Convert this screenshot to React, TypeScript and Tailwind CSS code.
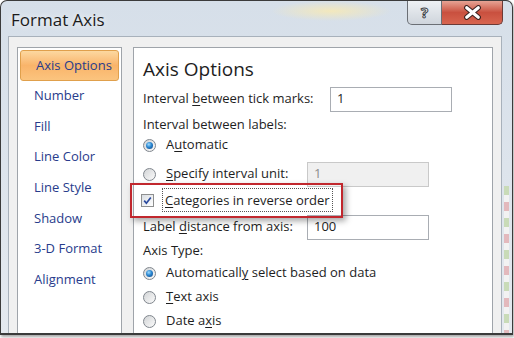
import React from 'react';

const navItems = ['Axis Options', 'Number', 'Fill', 'Line Color', 'Line Style', 'Shadow', '3-D Format', 'Alignment'];

const Radio = ({ checked }: { checked?: boolean }) => (
  <span className="w-[13px] h-[13px] rounded-full border border-[#80868d] bg-linear-to-br from-[#d2d4d6] to-[#fbfbfb] flex items-center justify-center shrink-0">
    {checked && (
      <span className="w-[7px] h-[7px] rounded-full bg-[radial-gradient(circle_at_40%_35%,#9fdcff_0%,#2a86d0_45%,#0f3f7c_100%)]" />
    )}
  </span>
);

const Check = () => (
  <span className="w-[13px] h-[13px] border border-[#8e8f8f] bg-linear-to-br from-[#d9dde2] to-white flex items-center justify-center shrink-0">
    <svg viewBox="0 0 11 11" className="w-[11px] h-[11px]">
      <path d="M2.2 5.6 L4.4 8.2 L8.8 2.4" stroke="#2b4a9e" strokeWidth="1.7" fill="none" />
    </svg>
  </span>
);

const U = ({ children }: { children: React.ReactNode }) => (
  <span className="underline decoration-1 underline-offset-2">{children}</span>
);

const Field = ({ value, disabled }: { value: string; disabled?: boolean }) => (
  <div
    className={
      disabled
        ? 'w-[122px] h-[25px] border border-[#c9c9c9] bg-[#f0f0f0] text-[#8d8d8d] flex items-center pl-[6px]'
        : 'w-[122px] h-[25px] border border-[#a9adb3] bg-white text-[#1e1e1e] flex items-center pl-[6px]'
    }
  >
    {value}
  </div>
);

export default function App() {
  return (
    <div className="w-[514px] h-[338px] bg-white overflow-hidden font-['Open_Sans','Noto_Sans',sans-serif]">
      <div className="w-[513px] h-[335px] rounded-t-[7px] border border-b-2 border-[#3b3b3b] bg-linear-to-b from-[#d6dfe9] to-[#e4e9ef] flex flex-col overflow-hidden shadow-[1px_2px_3px_rgba(0,0,0,0.35)]">
        {/* title bar */}
        <div className="h-[35px] flex items-start shrink-0 bg-[radial-gradient(ellipse_60px_10px_at_330px_10px,rgba(255,236,170,0.7),transparent)]">
          <span className="pl-[10px] pt-[7px] text-[17px] leading-[23px] text-[#1b1b1b] [text-shadow:0_0_6px_#fff]">Format Axis</span>
          <div className="ml-auto mr-[9px] flex">
            <div className="w-[35px] h-[24px] border border-t-0 border-[#6b6f75] rounded-bl-[5px] bg-linear-to-b from-[#eef1f4] to-[#cfd5dc] flex items-center justify-center">
              <span className="text-white font-bold text-[15px] leading-none [-webkit-text-stroke:1px_#3f4348]">?</span>
            </div>
            <div className="w-[61px] h-[24px] border border-t-0 border-l-0 border-[#6b3a36] rounded-br-[5px] bg-linear-to-b from-[#e6a394] via-[#c9503f] to-[#d8654f] flex items-center justify-center">
              <svg viewBox="0 0 18 14" className="w-[19px] h-[15px]">
                <path d="M3.5 2.5 L14.5 11.5 M14.5 2.5 L3.5 11.5" stroke="#3b2220" strokeWidth="5" strokeLinecap="round" />
                <path d="M3.5 2.5 L14.5 11.5 M14.5 2.5 L3.5 11.5" stroke="#ffffff" strokeWidth="3" strokeLinecap="round" />
              </svg>
            </div>
          </div>
        </div>

        {/* frame + client */}
        <div className="flex flex-1 min-h-0">
          <div className="w-[7px] shrink-0" />
          <div className="flex-1 border-t border-l border-r border-[#a8b1bb] bg-[#f0f0f0] pt-[10px] pl-[8px] pr-[8px] flex gap-[11px] min-h-0">
            {/* nav list */}
            <div className="w-[105px] shrink-0 border border-b-0 border-[#9fa4aa] bg-white pt-[2px] px-[2px]">
              {navItems.map((item, i) => (
                <div
                  key={item}
                  className={
                    i === 0
                      ? 'h-[30.6px] flex items-center pl-[15px] rounded-[3px] border border-[#e0a04c] bg-linear-to-b from-[#fcd8a0] via-[#f9b46a] to-[#fbc47e] text-[13px] text-[#283c8c]'
                      : 'h-[30.6px] flex items-center pl-[14px] text-[13px] text-[#283c8c]'
                  }
                >
                  {item}
                </div>
              ))}
            </div>

            {/* options panel */}
            <div className="flex-1 border border-b-0 border-[#9fa4aa] bg-white pl-[9px] text-[13px] text-[#1e1e1e]">
              <div className="pt-[8px] h-[36px] text-[19px] leading-[27px] text-[#1e1e1e]">Axis Options</div>
              <div className="mt-[2px] h-[26px] flex items-center">
                <span className="w-[187px]">
                  Interval <U>b</U>etween tick marks:
                </span>
                <Field value="1" />
              </div>
              <div className="mt-[3px] h-[20px] flex items-center">Interval between labels:</div>
              <div className="h-[20px] flex items-center gap-[10px]">
                <Radio checked />
                <span>
                  A<U>u</U>tomatic
                </span>
              </div>
              <div className="mt-[6px] h-[26px] flex items-center">
                <div className="w-[164px] flex items-center gap-[10px]">
                  <Radio />
                  <span>
                    <U>S</U>pecify interval unit:
                  </span>
                </div>
                <Field value="1" disabled />
              </div>
              <div className="relative mt-[3px] h-[20px] flex items-center">
                <span className="-ml-[2px]">
                  <Check />
                </span>
                <span className="ml-[8px] px-[2px] leading-[22px] border border-dotted border-[#555]">
                  <U>C</U>ategories in reverse order
                </span>
                <div className="absolute -left-[13px] -top-[7px] w-[213px] h-[35px] border-2 border-[#c1272d] shadow-[3px_3px_6px_rgba(0,0,0,0.35)]" />
              </div>
              <div className="mt-[4px] h-[26px] flex items-center">
                <span className="w-[164px]">
                  Label <U>d</U>istance from axis:
                </span>
                <Field value="100" />
              </div>
              <div className="mt-[1px] h-[20px] flex items-center">Axis Type:</div>
              <div className="mt-[2px] h-[20px] flex items-center gap-[10px]">
                <Radio checked />
                <span>
                  Automaticall<U>y</U> select based on data
                </span>
              </div>
              <div className="mt-[4px] h-[20px] flex items-center gap-[10px]">
                <Radio />
                <span>
                  <U>T</U>ext axis
                </span>
              </div>
              <div className="mt-[4px] h-[20px] flex items-center gap-[10px]">
                <Radio />
                <span>
                  Date a<U>x</U>is
                </span>
              </div>
            </div>
          </div>
          <div className="w-[10px] shrink-0 flex pl-[2px]">
            <div className="w-[5px] h-full mt-[150px] bg-[repeating-linear-gradient(to_bottom,#c9dbb8_0px,#c9dbb8_9px,#f2f2f2_9px,#f2f2f2_16px,#e3b9bd_16px,#e3b9bd_25px,#f2f2f2_25px,#f2f2f2_32px)]" />
          </div>
        </div>
      </div>
    </div>
  );
}
